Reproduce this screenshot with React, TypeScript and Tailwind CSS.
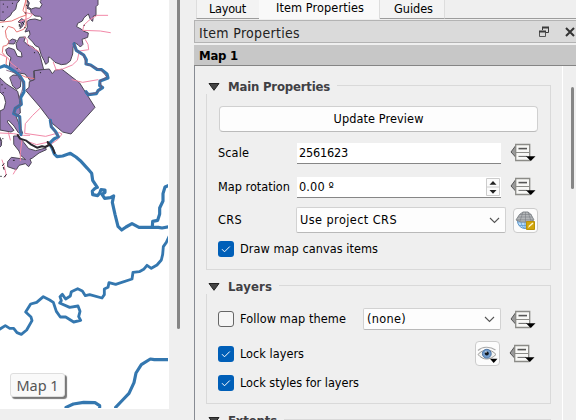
import React from "react";

const ui = "font-['DejaVu_Sans_Condensed','DejaVu_Sans',sans-serif] [font-stretch:condensed]";

function Label({ children, width, size = 12.6, bold = false, className = "" }: {
  children: string; width: number; size?: number; bold?: boolean; className?: string;
}) {
  const ref = React.useRef<HTMLSpanElement>(null);
  const [spacing, setSpacing] = React.useState(0);
  React.useLayoutEffect(() => {
    if (ref.current) {
      setSpacing((width - ref.current.getBoundingClientRect().width) / children.length);
    }
  }, [children, width]);
  return (
    <span
      ref={ref}
      className={`inline-block shrink-0 whitespace-pre leading-none ${bold ? "font-bold" : ""} ${className}`}
      style={{ fontSize: size, letterSpacing: spacing }}
    >
      {children}
    </span>
  );
}

function MapView() {
  return (
    <svg className="block h-[408px] w-[168px]" viewBox="0 0 504 1224" fill="none" strokeLinejoin="round" strokeLinecap="round">
      <g fill="#997db7" stroke="#4c4655" strokeWidth="3">
        <path d="M0 0H59L51 10 47 28 37 36 31 47 20 55 12 63 0 61Z" />
        <path d="M82 0 88 9 84 21 94 27 106 23 119 25 126 14 120 5 126 -3H294V14L288 20V46L280 48 278 64 271 58 265 42 252 53 247 63 233 70 230 80 243 87 252 94 265 99 263 112 246 118 249 133 241 141 234 134 222 127 219 145 218 162 211 183 199 192 184 194 165 187 150 172 145 171V187L137 193 132 181 124 166 117 142 106 137 98 126 84 112 90 103 88 92 75 96 82 82 80 65 89 59 105 57 122 62 126 54 119 49 105 48 93 38 92 29 81 25 84 13Z" />
        <path d="M76 112 72 124 84 136 97 140 114 155 120 166 131 209 101 213 102 241 92 244 75 222 51 218 28 203 29 187 33 173 21 163 17 149 26 143 43 149 52 169 66 171 64 157 51 147 48 131 58 113Z" />
        <path d="M27 124 37 117 49 121 42 132 26 131Z" />
        <path d="M30 232 39 225 53 226 63 242 61 261 50 268 39 259Z" />
        <path d="M104 212 127 209 148 207 157 221 166 210 186 208 239 249 285 322 213 402 188 396 158 371 120 321 77 271 87 262 88 245 103 239Z" />
        <path d="M0 234 18 251 53 274 59 302 61 339 48 350 56 368 68 400 55 398 42 378 25 360 22 366 42 391 33 396 0 390V333L12 327 17 307 12 288 0 276Z" />
        <path d="M42 408 56 408 72 428 86 446 107 452 137 444 139 449 117 459 96 475 90 477 94 488 86 500 76 491 57 496 49 509 23 500 23 485 34 472 70 477 77 479 62 466 57 453 42 434Z" />
        <path d="M0 413 5 424 4 437 0 441Z" />
        <path d="M55 65 65 56 74 62 68 78 60 86 64 71Z" />
      </g>
      <g stroke="#f289a8" strokeWidth="3">
        <path d="M78 0 69 31 79 45 59 52 35 63 0 67M78 0V75L71 88 50 96 41 84 25 79 16 93 19 112 28 125 20 136 9 139 7 158 20 173 18 192 36 212 76 231 102 236" stroke="#e77778" />
        <path d="M78 38 98 43 88 54 57 65M72 110 82 119 82 131 100 145 118 155M0 162 23 173 33 189 61 211" />
        <path d="M323 46H291L267 61 252 75 248 91 301 93 331 98M256 119 264 133 266 149 238 153 232 181 217 195 188 207 166 210M160 187 168 208M294 239 248 247 216 239" />
        <path d="M119 326 98 346 76 371 74 400 137 409 178 398 186 402 174 418 154 432 146 426 110 434 87 426M0 399 41 401 70 406 89 406" />
        <path d="M66 420 61 460 61 482M6 480 13 500 18 522 15 531M48 508 40 522M25 397 31 420" />
      </g>
      <g stroke="#3477af" strokeWidth="9.5">
        <path d="M0 202 13 197 25 202 43 214 60 228 71 246 72 276 62 293 64 313 46 325 41 341 59 350 61 386 63 404" />
        <path d="M222 132 229 151 251 165 259 179 258 192 272 195 291 208 305 209 321 222 324 234 300 243 299 257 308 263 294 272 289 281 265 284 258 275" />
        <path d="M151 361 154 380 167 395 175 410 162 417 148 430 157 446 163 462 171 470 188 468 211 460 228 471 241 482 262 505 275 520 278 541 292 562 285 565 277 573 278 584 293 587 299 579 303 569 315 570 315 577 306 583 314 595 331 593 341 588 337 607 345 643 354 679 365 690 378 681 396 671 417 682H475L486 684 507 680" />
        <path d="M507 556 495 561 489 581 489 603 479 624 479 642 473 661 458 664 457 681" />
        <path d="M507 710 499 727 490 740 488 763 484 780 471 795 454 805 441 796 431 808 418 815 399 817 396 837 347 853 327 848 324 862 313 867 313 884 306 894 269 884 256 887 247 873 233 866 214 875 211 888 197 897 187 883 180 890 184 902 179 909 209 922 234 918 240 934 236 950 242 961 221 966 197 951 181 951 169 934 160 907 149 900 130 890 110 907 92 912 77 936 93 951 96 962 80 990 64 1003 51 998 41 985H29L16 977 0 987" strokeWidth="8.5" />
        <path d="M507 1079H463L451 1077 424 1094 408 1119 402 1148 387 1180 368 1200 347 1222" />
        <path d="M198 1222 220 1212 251 1207 285 1208 299 1217 299 1222" />
      </g>
      <path d="M20 211 43 218 62 233 72 253 65 275 58 291 64 313 48 321 41 338 59 350 63 398M222 132 229 151 251 165 258 192 284 202 305 211 320 231 299 243 306 262 289 278 265 283 258 275M151 361 154 380 175 410" stroke="#765574" strokeWidth="2.5" />
      <path d="M53 405 60 416 79 422 94 434 111 443 126 439 136 441 147 435 143 426 157 442 164 459" stroke="#2b272e" strokeWidth="6" />
      <g stroke="#29252d" strokeWidth="3">
        <path d="M10 12v1M8 36h2M37 10h1M22 21h1M7 80h2M80 15v2M67 67l5 5M58 73v6M76 39h2M252 76h1M74 83h2M103 158h1M51 205h1M121 218h1M6 253v2M15 265h1M9 278h1M8 416h1M2 420h1M40 481h3M12 491l-5 6M10 502l2 6M19 524l-6 7M2 529h2" />
      </g>
    </svg>
  );
}

function Override() {
  return (
    <svg className="block h-[19px] w-[26px] shrink-0" viewBox="0 0 26 19">
      <path d="M6 2.2 1 9l5 5.5Z" fill="#999" stroke="#555" />
      <path d="M5.7 1.5h14v16h-14z" fill="#f8f8f6" stroke="#8b8b87" strokeWidth="1.3" />
      <path d="M6 9.5h13" stroke="#8b8b87" />
      <path d="M8.5 5.6H17" stroke="#555" strokeWidth="1.6" />
      <path d="M8.5 13.4H17" stroke="#666" />
      <path d="M16 13.2h9.5L20.8 18Z" fill="#000" />
    </svg>
  );
}

function Check({ checked = true }: { checked?: boolean }) {
  return (
    <span className={`flex size-4 shrink-0 items-center justify-center rounded-[3px] ${checked ? "bg-[#005fb8]" : "border border-[#666] bg-[#f5f5f5]"}`}>
      {checked && (
        <svg className="size-4" viewBox="0 0 16 16" fill="none" stroke="#fff" strokeWidth="1">
          <path d="m4 8.2 2.5 2.6 5.3-5.3" />
        </svg>
      )}
    </span>
  );
}

function Chevron() {
  return (
    <svg className="mr-[5px] ml-auto h-[7px] w-[11px]" viewBox="0 0 11 7" fill="none" stroke="#555" strokeWidth="1.1">
      <path d="m1 1 4.5 4.5L10 1" />
    </svg>
  );
}

function GroupTitle({ children, width }: { children: string; width: number }) {
  return (
    <div className="flex h-[18px] shrink-0 items-center">
      <svg className="mt-[3px] ml-[2px] h-[8px] w-[12px] shrink-0" viewBox="0 0 12 8">
        <path d="M1 .5h10L6 7.3Z" fill="#444" stroke="#222" />
      </svg>
      <Label bold size={13} width={width} className="mt-[3px] ml-[8px] text-[#404044]">{children}</Label>
      <span className="ml-[7px] h-[9px] flex-1 self-end border-t border-r border-[#d9d9d9]" />
    </div>
  );
}

const field = "flex h-[21px] w-[204px] items-center border-b border-[#868686] bg-white";
const combo = "flex items-center rounded-[2px] border border-[#d2d2d2] border-b-[#b9b9b9] bg-[#fdfdfd]";
const tool = "flex items-center justify-center rounded-[4px] border border-[#ccc] bg-[#fcfcfc]";

export default function App() {
  return (
    <div className={`flex h-[420px] w-[576px] overflow-hidden bg-[#efefef] text-black ${ui}`}>
      <div className="relative flex w-[194px] shrink-0">
        <div className="h-[409px] w-[169px] bg-white"><MapView /></div>
        <div className="ml-[8px] h-[329px] w-[3px] rounded-b bg-[#868686]" />
        <div className="absolute top-[373px] left-[10px] flex h-[24px] w-[55px] items-center justify-center rounded-[3px] border border-[#dedede] bg-[#f9f9f9] shadow-[2px_2px_1px_#777] font-['Noto_Sans',sans-serif]">
          <Label size={14.5} width={42} className="text-[#555]">Map 1</Label>
        </div>
      </div>

      <div className="flex w-[382px] shrink-0 flex-col">
        <div className="flex h-[20px] shrink-0 items-start">
          <div className="ml-[2px] flex h-[19px] w-[63px] border-b border-l border-b-[#9c9c9c] border-l-[#ddd] bg-[#f3f3f3]">
            <Label width={37} className="mt-[3px] ml-[12px]">Layout</Label>
          </div>
          <div className="flex h-[19px] w-[121px] border-r border-[#ddd] bg-[#f9f9f9]">
            <Label width={88} className="mt-[2px] ml-[17px]">Item Properties</Label>
          </div>
          <div className="flex h-[19px] w-[65px] border-r border-b border-r-[#ddd] border-b-[#9c9c9c] bg-[#f3f3f3]">
            <Label width={39} className="mt-[3px] ml-[14px]">Guides</Label>
          </div>
          <div className="h-[19px] flex-1 border-b border-[#9c9c9c]" />
        </div>

        <div className="flex h-[23px] shrink-0 items-center border border-r-0 border-[#b3b3b3] bg-[#dadada]">
          <Label size={14} width={101} className="mt-[2px] ml-[4px] text-[#222]">Item Properties</Label>
          <svg className="ml-auto h-[12px] w-[12px]" viewBox="0 0 12 12" fill="none" stroke="#3b3b3b">
            <path d="M4.5 4V1.5h6v5H8" />
            <path d="M4 1.5h7" strokeWidth="2" />
            <path d="M1.5 5.5h6v5h-6z" stroke="#555" />
            <path d="M1 5.5h7" strokeWidth="2" />
          </svg>
          <svg className="mr-[1px] ml-[15px] h-[10px] w-[10px]" viewBox="0 0 10 10" fill="none" stroke="#333" strokeWidth="2">
            <path d="m1 1 8 8M9 1 1 9" />
          </svg>
        </div>

        <div className="mt-[2px] flex h-[21px] shrink-0 items-center border-b border-[#858585] bg-[#c7c7c7]">
          <Label bold size={13} width={39} className="ml-[5px]">Map 1</Label>
        </div>

        <div className="flex h-[354px] shrink-0 border-l border-[#878b93]">
          <div className="flex w-[368px] flex-col overflow-hidden border-r border-white pt-[10px] pr-[11px] pl-[11px]">
            <GroupTitle width={102}>Main Properties</GroupTitle>
            <div className="flex h-[176px] shrink-0 flex-col border border-t-0 border-[#d9d9d9] pr-[12px] pl-[11px]">
              <div className="mt-[12px] ml-[1px] flex h-[26px] shrink-0 items-center justify-center rounded-[4px] border border-[#d0d0d0] border-b-[#bbb] bg-[#fdfdfd]">
                <Label width={90} className="mt-[1px]">Update Preview</Label>
              </div>
              <div className="mt-[11px] flex h-[21px] items-center">
                <div className="flex w-[79px]"><Label width={31}>Scale</Label></div>
                <div className={field}><Label width={49} className="mt-[1px] ml-[2px]">2561623</Label></div>
                <div className="-mt-[2px] ml-[9px]"><Override /></div>
              </div>
              <div className="mt-[13px] flex h-[21px] items-center">
                <div className="flex w-[79px]"><Label width={72}>Map rotation</Label></div>
                <div className={field}>
                  <Label width={35} className="mt-[1px] ml-[2px]">0.00 º</Label>
                  <svg className="mr-[1px] ml-auto h-[18px] w-[14px]" viewBox="0 0 14 18">
                    <path d="M.5.5h13v17H.5zM.5 9h13" fill="#fbfbfb" stroke="#ccc" />
                    <path d="M3.5 6.8h7L7 3ZM3.5 12h7L7 15.8Z" fill="#222" />
                  </svg>
                </div>
                <div className="-mt-[2px] ml-[9px]"><Override /></div>
              </div>
              <div className="mt-[9px] flex h-[26px] items-center">
                <div className="flex w-[78px]"><Label width={24}>CRS</Label></div>
                <div className={`${combo} h-[26px] w-[210px]`}>
                  <Label width={97} className="ml-[3px]">Use project CRS</Label>
                  <Chevron />
                </div>
                <div className={`${tool} ml-[7px] h-[25px] w-[25px]`}>
                  <svg className="size-[21px] shrink-0" viewBox="0 0 21 21" fill="none">
                    <circle cx="10" cy="11" r="7.5" fill="#b9dcfa" stroke="#6197c6" />
                    <path d="M2.5 12H18M4 15.5h12M10 11v7M6 11c0 3 1 5 3 7M14 11c0 3-1 5-3 7" stroke="#5e9bd0" strokeWidth=".8" />
                    <path d="M4.5 4.5 8 2h5l3 2.5 3 5.5-4 2H6l-5-2Z" fill="#b4b7b9" stroke="#858a8e" />
                    <path d="M3 7h14M2 9.8h16M8 2 5 11M10.5 2v10M13 2l3 9M4.5 4.5h12" stroke="#7a7e83" strokeWidth=".6" />
                    <path d="M11.5 11.5h8v8h-8z" fill="#d2a60b" stroke="#ba9308" />
                    <path d="m13 18 1-2.5 3.5-3 1 1-3.5 3Z" fill="#fff5ca" />
                  </svg>
                </div>
              </div>
              <div className="mt-[8px] flex h-[16px] items-center">
                <Check /><Label width={138} className="mt-[1px] ml-[6px]">Draw map canvas items</Label>
              </div>
            </div>

            <div className="h-[6px] shrink-0" />
            <GroupTitle width={44}>Layers</GroupTitle>
            <div className="flex h-[110px] shrink-0 flex-col border border-t-0 border-[#d9d9d9] pl-[11px]">
              <div className="mt-[14px] flex h-[22px] shrink-0 items-center">
                <Check checked={false} />
                <div className="mt-[1px] ml-[6px] flex w-[123px]"><Label width={106}>Follow map theme</Label></div>
                <div className={`${combo} h-[22px] w-[138px]`}>
                  <Label width={39} className="mt-[1px] ml-[3px]">(none)</Label>
                  <Chevron />
                </div>
                <div className="ml-[9px]"><Override /></div>
              </div>
              <div className="mt-[11px] flex h-[25px] shrink-0 items-center">
                <Check />
                <div className="mt-[1px] ml-[6px] flex w-[235px]"><Label width={64}>Lock layers</Label></div>
                <div className={`${tool} h-[25px] w-[25px]`}>
                  <svg className="h-[18px] w-[21px] shrink-0" viewBox="0 0 21 18" fill="none">
                    <path d="M1 5.5C5 1.5 13 1 18.5 5" stroke="#aaa" strokeWidth="1.2" />
                    <path d="M1 9.5c5-6 13-6 18 0-6 6-13 6-18 0Z" fill="#f2f2f0" stroke="#999" />
                    <circle cx="9.8" cy="8.7" r="4.4" fill="#739dcd" stroke="#4b75a6" />
                    <circle cx="9.8" cy="8.5" r="2" fill="#10161e" />
                    <circle cx="9" cy="7" r=".8" fill="#fff" />
                    <path d="M13 13.7h7.5L16.7 18Z" fill="#000" />
                  </svg>
                </div>
                <div className="ml-[9px]"><Override /></div>
              </div>
              <div className="mt-[9px] flex h-[16px] items-center">
                <Check /><Label width={119} className="mt-[1px] ml-[6px]">Lock styles for layers</Label>
              </div>
            </div>
            <div className="h-[6px] shrink-0" />
            <GroupTitle width={49}>Extents</GroupTitle>
          </div>
          <div className="mt-[21px] ml-[8px] h-[102px] w-[3px] rounded bg-[#868686]" />
        </div>
      </div>
    </div>
  );
}
